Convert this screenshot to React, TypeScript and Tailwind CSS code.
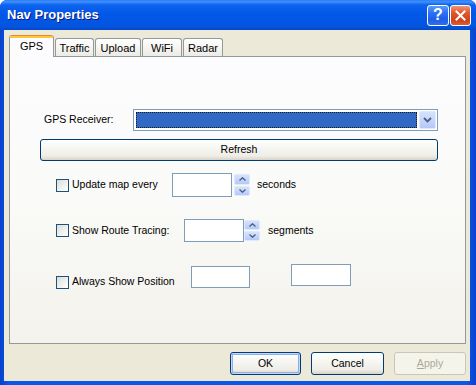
import React from "react";

const F = "font-['Liberation_Sans',Arial,sans-serif]";

function Chevron({ up }: { up?: boolean }) {
  return (
    <svg width="7" height="4" viewBox="0 0 7 4">
      <path
        d={up ? "M0.5 3.5 L3.5 0.8 L6.5 3.5" : "M0.5 0.5 L3.5 3.2 L6.5 0.5"}
        fill="none"
        stroke="#4D6185"
        strokeWidth="1.4"
      />
    </svg>
  );
}

function Spinner({ className }: { className: string }) {
  return (
    <div className={`flex flex-col gap-[1px] w-[16px] ${className}`}>
      <div className="flex-1 flex items-center justify-center rounded-[2px] border border-[#E0E8FD] bg-[linear-gradient(180deg,#D6E2FD_0%,#C3D4FB_60%,#B4C8F6_100%)]">
        <Chevron up />
      </div>
      <div className="flex-1 flex items-center justify-center rounded-[2px] border border-[#E0E8FD] bg-[linear-gradient(180deg,#D6E2FD_0%,#C3D4FB_60%,#B4C8F6_100%)]">
        <Chevron />
      </div>
    </div>
  );
}

function Checkbox() {
  return (
    <div className="w-[13px] h-[13px] shrink-0 border border-[#1C5180] bg-[linear-gradient(135deg,#DCDCD7_0%,#F2F2EE_60%,#FFFFFF_100%)]" />
  );
}

function TextBox({ className }: { className: string }) {
  return <div className={`bg-white border border-[#7F9DB9] ${className}`} />;
}

function XPButton({
  label,
  className,
  def,
  disabled,
}: {
  label: React.ReactNode;
  className: string;
  def?: boolean;
  disabled?: boolean;
}) {
  if (disabled) {
    return (
      <div
        className={`flex items-center justify-center rounded-[3px] border border-[#C9C7BA] bg-[#F5F4EA] text-[#ACA899] text-[10.5px] ${className}`}
      >
        {label}
      </div>
    );
  }
  return (
    <div
      className={`flex items-center justify-center rounded-[3px] border border-[#003C74] text-black text-[10.5px] bg-[linear-gradient(180deg,#FFFFFF_0%,#F6F6F2_40%,#EEEDE6_80%,#D8D3C8_100%)] ${
        def ? "shadow-[inset_0_0_0_1px_#C4D7F7,inset_0_0_0_2px_#8CAEE9]" : ""
      } ${className}`}
    >
      {label}
    </div>
  );
}

function Tab({ label, w }: { label: string; w: string }) {
  return (
    <div
      className={`${w} h-[18px] mb-[1px] flex items-center justify-center pt-[2px] rounded-t-[3px] border border-b-0 border-[#919B9C] bg-[linear-gradient(180deg,#FFFFFF_0%,#F6F5F1_50%,#ECEBE5_100%)] text-[11px] text-black`}
    >
      {label}
    </div>
  );
}

export default function App() {
  return (
    <div
      className={`${F} w-[476px] h-[385px] flex flex-col overflow-hidden rounded-t-[7px] bg-[linear-gradient(90deg,#0842CF_0%,#0A58E6_2%,#0A58E6_98%,#0842CF_100%)]`}
    >
      {/* Title bar */}
      <div className="h-[30px] shrink-0 flex items-center pl-[7px] pr-[5px] bg-[linear-gradient(180deg,#2E7CF5_0%,#3F90FF_6%,#0E63EE_16%,#0258E8_45%,#0256E2_75%,#0454DC_90%,#0447C6_100%)]">
        <span className="flex-1 text-white font-bold text-[13px] [text-shadow:1px_1px_#0A1883] pb-[1px]">
          Nav Properties
        </span>
        <div className="w-[22px] h-[21px] flex items-center justify-center rounded-[3px] border border-white bg-[linear-gradient(180deg,#5C9BFB_0%,#2E72F2_35%,#1D5FE8_70%,#2F6FEE_100%)] text-white font-bold text-[16px] leading-none">
          ?
        </div>
        <div className="ml-[1px] w-[21px] h-[21px] flex items-center justify-center rounded-[3px] border border-white bg-[linear-gradient(180deg,#F09478_0%,#E2582E_35%,#D14318_75%,#DE5E36_100%)]">
          <svg width="11" height="11" viewBox="0 0 11 11">
            <path d="M1.5 1.5 L9.5 9.5 M9.5 1.5 L1.5 9.5" stroke="white" strokeWidth="2" strokeLinecap="square" />
          </svg>
        </div>
      </div>

      {/* Client */}
      <div className="flex-1 flex flex-col ml-[4px] mr-[6px] mb-[4px] bg-[#ECE9D8]">
        {/* Tabs */}
        <div className="relative z-10 mt-[5px] ml-[5px] h-[22px] flex items-end gap-[1px]">
          <div className="w-[45px] h-[22px] flex flex-col rounded-t-[3px] border-x border-[#919B9C] bg-[#FCFCFE] overflow-hidden">
            <div className="h-[1px] bg-[#E68B2C]" />
            <div className="h-[2px] bg-[#FFC73C]" />
            <div className="flex-1 flex items-center justify-center text-[11px] text-black pb-[2px]">
              GPS
            </div>
          </div>
          <Tab label="Traffic" w="w-[39px]" />
          <Tab label="Upload" w="w-[46px]" />
          <Tab label="WiFi" w="w-[40px]" />
          <Tab label="Radar" w="w-[40px]" />
        </div>

        {/* Panel */}
        <div className="-mt-px ml-[5px] mr-[4px] h-[288px] flex flex-col border border-[#919B9C] bg-[linear-gradient(180deg,#FCFCFE_0%,#FAFAF8_50%,#F3F2EC_100%)] text-[10.5px] text-black">
          {/* GPS receiver */}
          <div className="mt-[52px] h-[22px] flex items-center">
            <span className="ml-[34px] w-[89px]">GPS Receiver:</span>
            <div className="w-[305px] h-[22px] flex items-stretch border border-[#7F9DB9] bg-white p-[2px] gap-[2px]">
              <div className="flex-1 border border-dotted border-[#1A1A1A] bg-[#316AC5]" />
              <div className="w-[17px] -my-[1px] -mr-[1px] flex items-center justify-center rounded-[2px] border border-[#E0E8FD] bg-[linear-gradient(180deg,#D6E2FD_0%,#C3D4FB_60%,#B4C8F6_100%)]">
                <svg width="9" height="6" viewBox="0 0 9 6">
                  <path d="M1 1 L4.5 4.5 L8 1" fill="none" stroke="#4D6185" strokeWidth="1.8" />
                </svg>
              </div>
            </div>
          </div>

          {/* Refresh */}
          <XPButton label="Refresh" className="mt-[8px] ml-[30px] w-[398px] h-[22px]" />

          {/* Row 1 */}
          <div className="mt-[12px] h-[24px] flex items-center">
            <div className="ml-[46px] flex items-center">
              <Checkbox />
            </div>
            <span className="ml-[3px] w-[100px]">Update map every</span>
            <TextBox className="w-[60px] h-[24px]" />
            <Spinner className="ml-[2px] h-[22px]" />
            <span className="ml-[7px]">seconds</span>
          </div>

          {/* Row 2 */}
          <div className="mt-[22px] h-[23px] flex items-center">
            <div className="ml-[46px] flex items-center">
              <Checkbox />
            </div>
            <span className="ml-[3px] w-[112px]">Show Route Tracing:</span>
            <TextBox className="w-[60px] h-[23px]" />
            <Spinner className="h-[21px]" />
            <span className="ml-[8px]">segments</span>
          </div>

          {/* Row 3 */}
          <div className="mt-[22px] h-[24px] flex items-start">
            <div className="mt-[11px] h-[14px] ml-[46px] flex items-center">
              <Checkbox />
              <span className="ml-[3px] w-[119px]">Always Show Position</span>
            </div>
            <TextBox className="mt-[2px] w-[59px] h-[22px]" />
            <TextBox className="ml-[41px] w-[60px] h-[22px]" />
          </div>
        </div>

        {/* Bottom buttons */}
        <div className="mt-[8px] mr-[4px] h-[23px] flex justify-end gap-[10px]">
          <XPButton label="OK" def className="w-[71px] h-[23px]" />
          <XPButton label="Cancel" className="w-[73px] h-[23px]" />
          <XPButton
            label={
              <span>
                <span className="underline">A</span>pply
              </span>
            }
            disabled
            className="w-[72px] h-[23px]"
          />
        </div>
      </div>
    </div>
  );
}
